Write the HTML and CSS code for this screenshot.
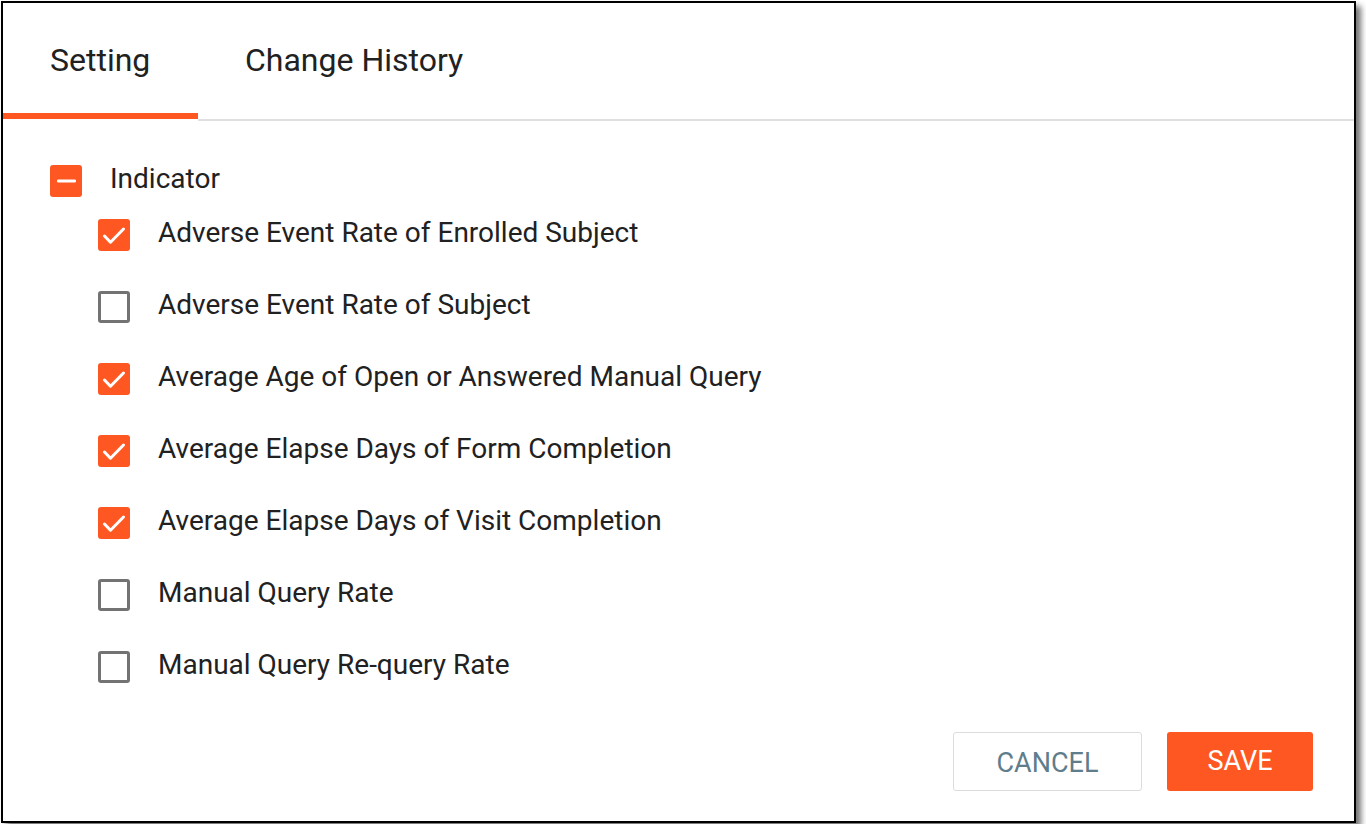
FILE: index.html
```html
<!DOCTYPE html>
<html lang="en">
<head>
<meta charset="utf-8">
<title>Indicator Settings</title>
<link rel="stylesheet" href="styles.css">
</head>
<body>
<div class="dialog">
  <div class="tabs">
    <div class="tab active">Setting</div>
    <div class="tab">Change History</div>
  </div>
  <div class="content">
    <div class="row parent">
      <span class="box checked">
        <svg viewBox="0 0 32 32" width="32" height="32"><rect x="7" y="14.5" width="19" height="3" rx="1.2" fill="#fff"/></svg>
      </span>
      <span class="label">Indicator</span>
    </div>
    <div class="children">
      <div class="row">
        <span class="box checked"><svg viewBox="0 0 32 32" width="32" height="32"><polyline points="6.5,17 12.5,23.2 25.5,10" fill="none" stroke="#fff" stroke-width="3" stroke-linecap="round" stroke-linejoin="round"/></svg></span>
        <span class="label">Adverse Event Rate of Enrolled Subject</span>
      </div>
      <div class="row">
        <span class="box"></span>
        <span class="label">Adverse Event Rate of Subject</span>
      </div>
      <div class="row">
        <span class="box checked"><svg viewBox="0 0 32 32" width="32" height="32"><polyline points="6.5,17 12.5,23.2 25.5,10" fill="none" stroke="#fff" stroke-width="3" stroke-linecap="round" stroke-linejoin="round"/></svg></span>
        <span class="label">Average Age of Open or Answered Manual Query</span>
      </div>
      <div class="row">
        <span class="box checked"><svg viewBox="0 0 32 32" width="32" height="32"><polyline points="6.5,17 12.5,23.2 25.5,10" fill="none" stroke="#fff" stroke-width="3" stroke-linecap="round" stroke-linejoin="round"/></svg></span>
        <span class="label">Average Elapse Days of Form Completion</span>
      </div>
      <div class="row">
        <span class="box checked"><svg viewBox="0 0 32 32" width="32" height="32"><polyline points="6.5,17 12.5,23.2 25.5,10" fill="none" stroke="#fff" stroke-width="3" stroke-linecap="round" stroke-linejoin="round"/></svg></span>
        <span class="label">Average Elapse Days of Visit Completion</span>
      </div>
      <div class="row">
        <span class="box"></span>
        <span class="label">Manual Query Rate</span>
      </div>
      <div class="row">
        <span class="box"></span>
        <span class="label">Manual Query Re-query Rate</span>
      </div>
    </div>
  </div>
  <div class="footer">
    <button class="btn cancel">CANCEL</button>
    <button class="btn save">SAVE</button>
  </div>
</div>
</body>
</html>
```

FILE: styles.css
```css
html, body {
  margin: 0;
  padding: 0;
  background: #fff;
}

body {
  font-family: Roboto, "Liberation Sans", sans-serif;
  color: #212121;
}

.dialog {
  box-sizing: border-box;
  margin: 1px;
  width: 1355px;
  height: 822px;
  border: 2px solid #000;
  background: #fff;
  box-shadow: 5px 5px 6px rgba(0, 0, 0, 0.55);
  display: flex;
  flex-direction: column;
}

.tabs {
  display: flex;
  height: 116px;
  border-bottom: 2px solid #e0e0e0;
  flex-shrink: 0;
}

.tab {
  box-sizing: border-box;
  display: flex;
  align-items: center;
  padding: 0 47px 2px 47px;
  font-size: 32px;
  color: #212121;
  white-space: nowrap;
}

.tab.active {
  width: 195px;
  margin-bottom: -2px;
  border-bottom: 2px solid #fff;
  box-shadow: inset 0 -6px 0 #ff5722;
}

.content {
  flex: 1;
  padding: 44px 0 0 47px;
}

.row {
  display: flex;
  align-items: center;
  height: 32px;
  font-size: 28px;
}

.parent {
  gap: 28px;
}

.children {
  margin: 22px 0 0 48px;
  display: flex;
  flex-direction: column;
  gap: 40px;
}

.children .row {
  gap: 28px;
}

.label {
  line-height: 32px;
  position: relative;
  top: -2px;
}

.box {
  box-sizing: border-box;
  width: 32px;
  height: 32px;
  flex-shrink: 0;
  border: 3px solid #737373;
  border-radius: 3px;
  background: #fff;
}

.box.checked {
  border: none;
  background: #ff5722;
}

.box svg {
  display: block;
}

.footer {
  display: flex;
  justify-content: flex-end;
  gap: 25px;
  padding: 0 41px 30px 0;
}

.btn {
  box-sizing: border-box;
  height: 59px;
  border-radius: 3px;
  font-family: Roboto, "Liberation Sans", sans-serif;
  font-size: 27px;
  cursor: pointer;
}

.cancel {
  width: 189px;
  border: 1px solid #dcdcdc;
  background: #fff;
  color: #607d8b;
  padding-top: 4px;
}

.save {
  width: 146px;
  border: none;
  background: #ff5722;
  color: #fff;
  padding-bottom: 2px;
}
```
